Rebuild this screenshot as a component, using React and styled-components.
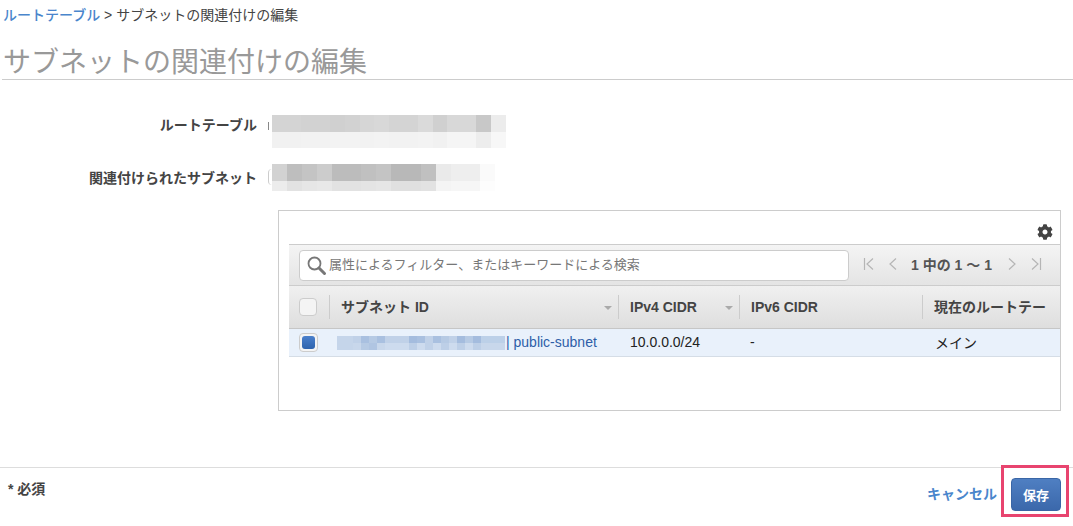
import styled, { createGlobalStyle } from "styled-components"
import { FaCog } from "react-icons/fa"

const Global = createGlobalStyle`
  html, body {
    margin: 0;
    padding: 0;
    background: #fff;
  }
  body {
    font-family: "Liberation Sans", "Noto Sans CJK JP", sans-serif;
    font-size: 14px;
    color: #333;
  }
`

const Page = styled.div`
  width: 1073px;
  height: 526px;
  overflow: hidden;
  display: flex;
  flex-direction: column;
`
const Breadcrumb = styled.div`
  height: 30px;
  line-height: 30px;
  padding-left: 3px;
  color: #444;
  white-space: nowrap;
`
const LinkText = styled.a`
  color: #4a86cc;
  font-weight: ${(p) => (p.$bold ? 700 : 500)};
`
const Title = styled.h1`
  margin: 0 0 0 2px;
  height: 50px;
  line-height: 65px;
  box-sizing: border-box;
  border-bottom: 1px solid #ccc;
  padding-left: 1px;
  font-size: 28px;
  font-weight: 400;
  color: #999;
  white-space: nowrap;
`
const Form = styled.div`
  display: flex;
  flex-direction: column;
  padding-top: 35px;
`
const FormRow = styled.div`
  display: flex;
  align-items: flex-start;
  height: ${(p) => p.$height}px;
`
const Label = styled.div`
  width: 257px;
  text-align: right;
  font-weight: 700;
  color: #444;
  line-height: 20px;
  padding-top: ${(p) => p.$top}px;
  box-sizing: border-box;
  white-space: nowrap;
`
const FieldStub = styled.div`
  width: 4px;
  height: ${(p) => p.$height}px;
  margin: ${(p) => p.$top}px 0 0 11px;
  box-sizing: border-box;
  border-left: 1px solid ${(p) => (p.$rounded ? "#ccc" : "#888")};
  border-radius: ${(p) => (p.$rounded ? "4px 0 0 4px" : "0")};
`
const Mosaic = styled.div`
  display: flex;
  flex-direction: column;
`
const MosaicRow = styled.div`
  display: flex;
  height: ${(p) => p.$height}px;
`
const Cell = styled.div`
  width: ${(p) => p.$width}px;
  height: 100%;
  background: ${(p) => p.$color};
`
const Panel = styled.div`
  margin: 14px 12px 0 278px;
  height: 201px;
  box-sizing: border-box;
  border: 1px solid #ccc;
  padding: 11px 0 0 10px;
  display: flex;
  flex-direction: column;
`
const GearRow = styled.div`
  height: 22px;
  box-sizing: border-box;
  padding: 2px 7px 0 0;
  display: flex;
  justify-content: flex-end;
  color: #444;
  font-size: 16px;
`
const Toolbar = styled.div`
  height: 42px;
  box-sizing: border-box;
  border-top: 1px solid #ccc;
  border-bottom: 1px solid #ccc;
  background: linear-gradient(#f4f4f4, #e4e4e4);
  display: flex;
  align-items: center;
  padding-left: 10px;
`
const SearchBox = styled.div`
  width: 550px;
  height: 31px;
  box-sizing: border-box;
  background: #fff;
  border: 1px solid #ccc;
  border-radius: 4px;
  display: flex;
  align-items: center;
  gap: 3px;
  padding-left: 6px;
  font-size: 13px;
  color: #777;
  white-space: nowrap;
`
const Placeholder = styled.span`
  margin-bottom: 3px;
  margin-left: -1px;
`
const Pager = styled.div`
  margin-left: 14px;
  margin-bottom: 2px;
  display: flex;
  align-items: center;
  color: #555;
  font-weight: 700;
  white-space: nowrap;
`
const PagerIcon = styled.svg`
  width: 12px;
  height: 14px;
  margin-left: ${(p) => p.$before}px;
  margin-right: ${(p) => p.$gap}px;
  fill: none;
  stroke: #b5b5b5;
  stroke-width: 1.2;
`
const HeaderRow = styled.div`
  display: grid;
  grid-template-columns: 40px 289px 121px 183px 137px;
  height: 43px;
  box-sizing: border-box;
  background: linear-gradient(#f0f0f0, #dedede);
  border-bottom: 1px solid #c6c6c6;
  align-items: center;
`
const HeaderCell = styled.div`
  height: 24px;
  line-height: 24px;
  box-sizing: border-box;
  border-left: ${(p) => (p.$first ? "none" : "1px solid #ccc")};
  padding-left: ${(p) => (p.$first ? 10 : 11)}px;
  padding-right: 8px;
  display: flex;
  justify-content: space-between;
  align-items: center;
  font-weight: 700;
  color: #444;
  white-space: nowrap;
  overflow: hidden;
`
const SortArrow = styled.span`
  width: 0;
  height: 0;
  border-left: 4px solid transparent;
  border-right: 4px solid transparent;
  border-top: 4px solid #aaa;
  margin-top: 2px;
  margin-right: -2px;
`
const EmptyBox = styled.div`
  width: 18px;
  height: 18px;
  box-sizing: border-box;
  border: 1px solid #ccc;
  border-radius: 4px;
  background: #f4f4f4;
`
const BodyRow = styled.div`
  display: grid;
  grid-template-columns: 40px 289px 121px 183px 137px;
  height: 28px;
  box-sizing: border-box;
  background: #e9f1fb;
  border-bottom: 1px solid #d5dde6;
  align-items: center;
`
const BodyCell = styled.div`
  padding-left: ${(p) => p.$left}px;
  color: #222;
  white-space: nowrap;
  display: flex;
  align-items: center;
`
const CellText = styled.span`
  margin-bottom: 2px;
`
const CheckedBox = styled.div`
  width: 19px;
  height: 19px;
  box-sizing: border-box;
  border: 1px solid #ccc;
  border-radius: 4px;
  background: #f4f4f4;
  padding: 2px;
  display: flex;
`
const CheckFill = styled.div`
  flex: 1;
  border-radius: 3px;
  background: linear-gradient(#4a80cc, #2f64ad);
`
const SubnetLink = styled.span`
  color: #2e5ea8;
  margin-left: 1px;
  margin-bottom: 2px;
`
const Footer = styled.div`
  margin-top: 56px;
  border-top: 1px solid #ddd;
  height: 58px;
  display: flex;
  justify-content: space-between;
  padding-left: 8px;
`
const Required = styled.div`
  font-weight: 700;
  color: #444;
  padding-top: 11px;
  line-height: 20px;
`
const Actions = styled.div`
  display: flex;
  align-items: flex-start;
  padding: 10px 12px 0 0;
`
const CancelLink = styled(LinkText)`
  margin-top: 6px;
  margin-right: 14px;
  line-height: 20px;
`
const SaveWrap = styled.div`
  position: relative;
`
const SaveButton = styled.button`
  width: 50px;
  height: 33px;
  padding: 0;
  border: 1px solid #3a66a6;
  border-radius: 4px;
  background: linear-gradient(#4f7fc2, #3b68ab);
  color: #fff;
  font: 700 13px "Liberation Sans", "Noto Sans CJK JP", sans-serif;
`
const Highlight = styled.div`
  position: absolute;
  left: -10px;
  right: -8px;
  top: -13px;
  bottom: -6px;
  border: 3px solid #e8446f;
`

const routeTop = ["#d4d4d4","#d4d4d4","#d2d2d2","#d2d2d2","#d0d0d0","#d2d2d2","#d6d6d6","#d8d8d8","#d4d4d4","#d4d4d4","#dadada","#d0d0d0","#d8d8d8","#d8d8d8","#c8c8c8","#ececec"]
const routeBottom = ["#f1f1f1","#f1f1f1","#f2f2f2","#f2f2f2","#f3f3f3","#f3f3f3","#f2f2f2","#f3f3f3","#f2f2f2","#f2f2f2","#f3f3f3","#f1f1f1","#f5f5f5","#f5f5f5","#ededed","#f7f7f7"]
const assocTop = ["#d2d2d2","#bebebe","#c4c4c4","#cccccc","#bcbcbc","#bcbcbc","#c0c0c0","#c4c4c4","#b8b8b8","#b8b8b8","#c0c0c0","#eaeaea","#eeeeee","#eeeeee","#fafafa"]
const assocBottom = ["#ececec","#e2e2e2","#e6e6e6","#e8e8e8","#e2e2e2","#e2e2e2","#e4e4e4","#e6e6e6","#e0e0e0","#e0e0e0","#e2e2e2","#f4f4f4","#f6f6f6","#f6f6f6","#fdfdfd"]
const idTop = ["#c5d5ea","#c5d5ea","#c0d1e8","#a9c0e0","#b6cae4","#a9c0e0","#c0d1e8","#c0d1e8","#c0d1e8","#a4bcde","#a9c0e0","#c0d1e8","#a9c0e0","#b6cae4","#c0d1e8","#a4bcde","#b6cae4","#a4bcde","#bcd0e8","#bcd0e8","#bcd0e8"]
const idBottom = ["#c5d5ea","#c5d5ea","#c8d7eb","#b6cae4","#b0c5e2","#c8d7eb","#cddbee","#cddbee","#cddbee","#bdcfe7","#cddbee","#c0d1e8","#cddbee","#bdcfe7","#cddbee","#bdcfe7","#cddbee","#bdcfe7","#c8d7eb","#c8d7eb","#c8d7eb"]

const Pixels = ({ top, bottom, width, topHeight, bottomHeight }) => (
  <Mosaic>
    <MosaicRow $height={topHeight}>
      {top.map((c, i) => <Cell key={i} $width={width} $color={c} />)}
    </MosaicRow>
    <MosaicRow $height={bottomHeight}>
      {bottom.map((c, i) => <Cell key={i} $width={width} $color={c} />)}
    </MosaicRow>
  </Mosaic>
)

const SearchIcon = () => (
  <svg width="21" height="21" viewBox="0 0 21 21" fill="none" stroke="#777">
    <circle cx="8.5" cy="8.5" r="6" strokeWidth="1.8" />
    <path d="M13 13l5.5 5.5" strokeWidth="3" strokeLinecap="round" />
  </svg>
)

const App = () => {
  return (
    <Page>
      <Global />
      <Breadcrumb>
        <LinkText>ルートテーブル</LinkText> &gt; サブネットの関連付けの編集
      </Breadcrumb>
      <Title>サブネットの関連付けの編集</Title>
      <Form>
        <FormRow $height={49}>
          <Label $top={0}>ルートテーブル</Label>
          <FieldStub $top={7} $height={8} />
          <Pixels top={routeTop} bottom={routeBottom} width={14.6} topHeight={17} bottomHeight={16} />
        </FormRow>
        <FormRow $height={32}>
          <Label $top={4}>関連付けられたサブネット</Label>
          <FieldStub $top={5} $height={16} $rounded />
          <Pixels top={assocTop} bottom={assocBottom} width={14.9} topHeight={17} bottomHeight={10} />
        </FormRow>
      </Form>
      <Panel>
        <GearRow><FaCog /></GearRow>
        <Toolbar>
          <SearchBox>
            <SearchIcon />
            <Placeholder>属性によるフィルター、またはキーワードによる検索</Placeholder>
          </SearchBox>
          <Pager>
            <PagerIcon viewBox="0 0 12 14" $before={0} $gap={12}><path d="M1.5 1v12M10 1.5L4 7l6 5.5" /></PagerIcon>
            <PagerIcon viewBox="0 0 12 14" $before={0} $gap={12}><path d="M9 1.5L3 7l6 5.5" /></PagerIcon>
            1 中の 1 〜 1
            <PagerIcon viewBox="0 0 12 14" $before={14} $gap={12}><path d="M3 1.5L9 7l-6 5.5" /></PagerIcon>
            <PagerIcon viewBox="0 0 12 14" $before={0} $gap={0}><path d="M10.5 1v12M2 1.5L8 7l-6 5.5" /></PagerIcon>
          </Pager>
        </Toolbar>
        <HeaderRow>
          <HeaderCell $first><EmptyBox /></HeaderCell>
          <HeaderCell>サブネット ID<SortArrow /></HeaderCell>
          <HeaderCell>IPv4 CIDR<SortArrow /></HeaderCell>
          <HeaderCell>IPv6 CIDR</HeaderCell>
          <HeaderCell>現在のルートテー</HeaderCell>
        </HeaderRow>
        <BodyRow>
          <BodyCell $left={10}><CheckedBox><CheckFill /></CheckedBox></BodyCell>
          <BodyCell $left={8}>
            <Pixels top={idTop} bottom={idBottom} width={8} topHeight={7} bottomHeight={7} />
            <SubnetLink>| public-subnet</SubnetLink>
          </BodyCell>
          <BodyCell $left={12}><CellText>10.0.0.0/24</CellText></BodyCell>
          <BodyCell $left={11}><CellText>-</CellText></BodyCell>
          <BodyCell $left={13}><CellText>メイン</CellText></BodyCell>
        </BodyRow>
      </Panel>
      <Footer>
        <Required>* 必須</Required>
        <Actions>
          <CancelLink $bold>キャンセル</CancelLink>
          <SaveWrap>
            <SaveButton>保存</SaveButton>
            <Highlight />
          </SaveWrap>
        </Actions>
      </Footer>
    </Page>
  )
}

export default App
